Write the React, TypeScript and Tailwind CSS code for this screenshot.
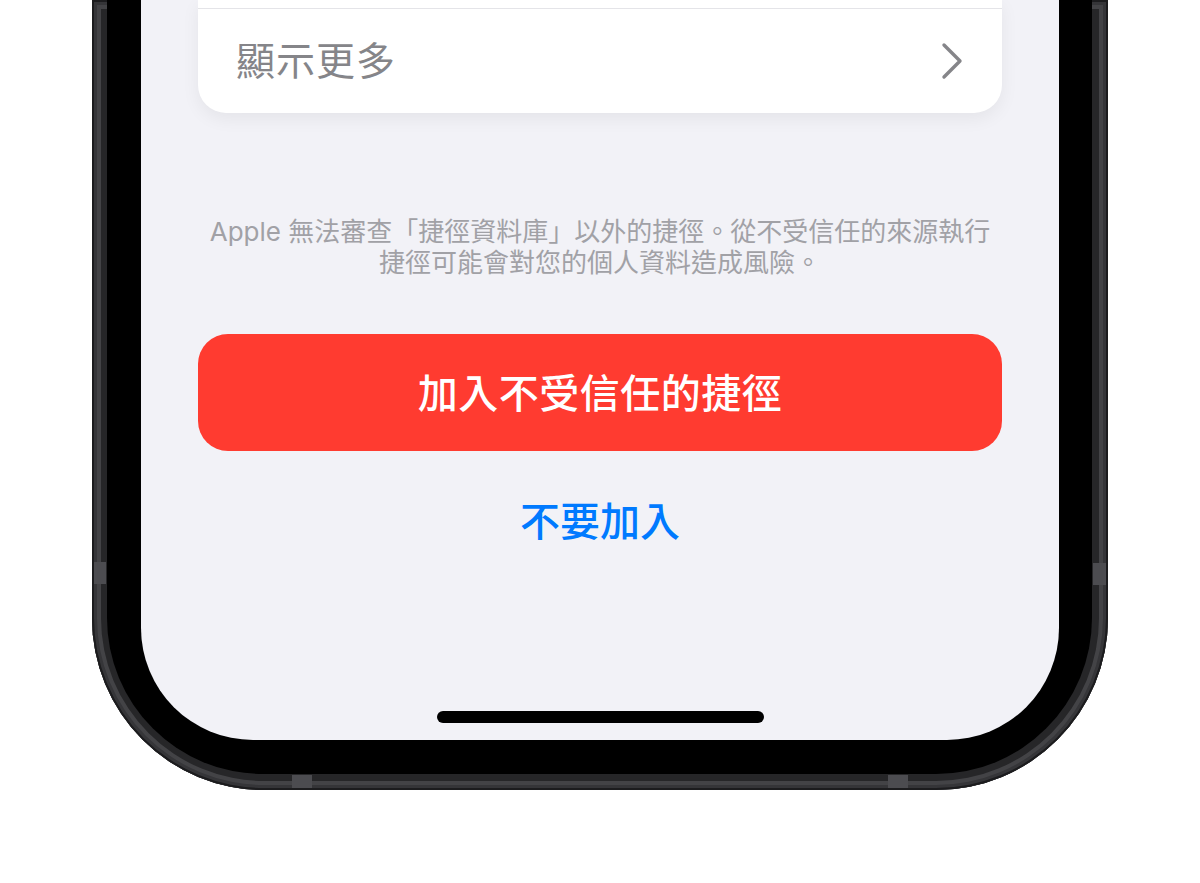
import React from "react";

const cjk = '"Inter", "Noto Sans CJK TC", sans-serif';

export default function App() {
  return (
    <div className="w-[1200px] h-[883px] bg-white overflow-hidden" style={{ fontFamily: cjk }}>
      <div className="relative ml-[92px] w-[1016px] h-[790px] rounded-b-[172px] bg-[#262628] pl-[15px] pr-[16px] pb-[16px] shadow-[inset_0_0_0_2px_#1c1c1e,inset_0_0_0_5px_#353538,inset_0_0_0_9px_#434346]">
        {/* antenna bands */}
        <span className="absolute left-[2px] top-[562px] w-[12px] h-[22px] bg-[#4c4c50]" />
        <span className="absolute right-[2px] top-[563px] w-[13px] h-[22px] bg-[#4c4c50]" />
        <span className="absolute bottom-[2px] left-[200px] w-[20px] h-[13px] bg-[#4c4c50]" />
        <span className="absolute bottom-[2px] right-[200px] w-[20px] h-[13px] bg-[#4c4c50]" />
        <div className="relative w-full h-full bg-black rounded-b-[156px] pl-[34px] pr-[33px] pb-[34px]">
          <div className="w-[918px] h-[740px] bg-[#f2f2f7] rounded-b-[112px] flex flex-col items-center">
            {/* card */}
            <div className="w-[804px] bg-white rounded-b-[28px] shadow-[0_6px_18px_rgba(0,0,0,0.06)] flex flex-col">
              <div className="h-[8px]" />
              <div className="h-px bg-[#e4e4e8]" />
              <div className="h-[104px] flex items-center justify-between pl-[38px] pr-[38px]">
                <span className="text-[39px] leading-[48px] text-[#858589] tracking-[1px]">顯示更多</span>
                <svg width="24" height="38" viewBox="0 0 24 38" fill="none">
                  <path d="M4 3 L20 19 L4 35" stroke="#858589" strokeWidth="3.4" strokeLinecap="round" strokeLinejoin="round" />
                </svg>
              </div>
            </div>
            {/* disclaimer */}
            <div className="mt-[103px] w-[800px] text-center text-[26px] leading-[31px] text-[#a1a1a6]">
              <div>Apple 無法審查「捷徑資料庫」以外的捷徑。從不受信任的來源執行</div>
              <div>捷徑可能會對您的個人資料造成風險。</div>
            </div>
            {/* red button */}
            <div className="mt-[56px] w-[804px] h-[117px] rounded-[30px] bg-[#ff3b30] flex items-center justify-center">
              <span className="text-white text-[40px] leading-[48px] font-medium tracking-[0.5px] mt-[3px]">加入不受信任的捷徑</span>
            </div>
            <div className="mt-[47px] text-[#007aff] text-[40px] leading-[48px] font-medium">不要加入</div>
            <div className="mt-auto mb-[17px] w-[327px] h-[12px] rounded-full bg-black" />
          </div>
        </div>
      </div>
    </div>
  );
}
